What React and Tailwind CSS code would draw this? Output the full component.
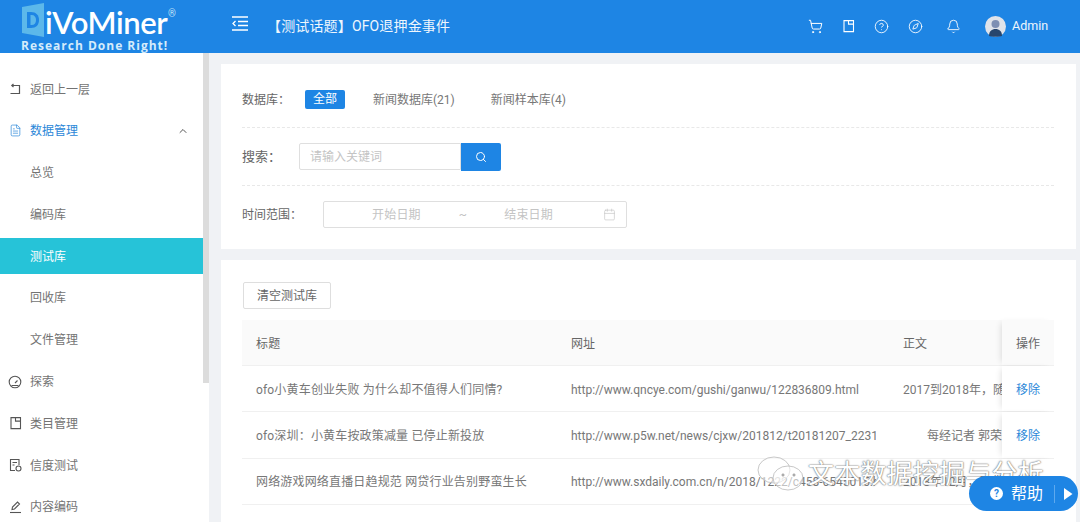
import React from "react";
import { ShoppingCart, CircleHelp, Compass, Bell, Search, Calendar, FileText, ChevronUp } from "lucide-react";

const FONT = "font-['Roboto','Noto_Sans_CJK_SC',sans-serif]";

function BackIcon() {
  return (
    <svg width="13" height="13" viewBox="0 0 13 13" fill="none" stroke="currentColor" strokeWidth="1.2">
      <path d="M3 2.500h7.500v8H1.500" />
      <path d="M4.500 1L2.800 2.500 4.500 4" />
    </svg>
  );
}

function BookIcon({ size = 13 }) {
  return (
    <svg width={size} height={size * 1.1} viewBox="0 0 13 14" fill="none" stroke="currentColor" strokeWidth="1.1">
      <path d="M2 1.500h9.500v11H2z" />
      <path d="M6.500 1.500v3.500h5" />
    </svg>
  );
}

function GaugeIcon() {
  return (
    <svg width="14" height="14" viewBox="0 0 14 14" fill="none" stroke="currentColor" strokeWidth="1.1">
      <circle cx="7" cy="7" r="5.800" />
      <path d="M7 8l2.500-2.500M3.500 10.500h7" />
    </svg>
  );
}

function TrustIcon() {
  return (
    <svg width="13" height="14" viewBox="0 0 13 14" fill="none" stroke="currentColor" strokeWidth="1.1">
      <path d="M6 12.500H1.500v-11h8.500v5.500" />
      <path d="M3.500 4.500h4.500M3.500 7h2" />
      <circle cx="9.500" cy="10.500" r="2.500" />
    </svg>
  );
}

function PenIcon() {
  return (
    <svg width="13" height="14" viewBox="0 0 13 14" fill="none" stroke="currentColor" strokeWidth="1.1">
      <path d="M3 9.500l.5-2.500L8.500 2l2 2-5 5z" />
      <path d="M1 12.500h11" />
    </svg>
  );
}

function MenuItem({ icon, label, active, sub, blue, chevron }) {
  return (
    <div
      className={`flex h-[36px] items-center text-[12px] shrink-0 ${
        active ? "bg-[#26c3d8] text-white" : blue ? "text-[#2b87d8]" : "text-[#737373]"
      }`}
    >
      {sub ? (
        <span className="pl-[30px] pt-[1px]">{label}</span>
      ) : (
        <>
          <span className="flex w-[30px] justify-center text-[#555]">
            <span className={blue ? "text-[#2b87d8]" : ""}>{icon}</span>
          </span>
          <span className="pt-[1px]">{label}</span>
        </>
      )}
      {chevron && <ChevronUp size={12} className="ml-auto mr-[14px] text-[#555]" />}
    </div>
  );
}

function Logo() {
  return (
    <div className="relative h-[53px] w-[203px] shrink-0 overflow-hidden">
      <svg className="absolute left-[22px] top-[3px]" width="22" height="34" viewBox="0 0 22 34">
        <path d="M0 4L22 0v34L0 30z" fill="#5cb8ea" />
        <path d="M5 9h4c5 0 8 3 8 8s-3 8-8 8H5z" fill="#1e85e4" />
        <path d="M8.500 12h1c3 0 4.500 2 4.500 5s-1.500 5-4.500 5h-1z" fill="#5cb8ea" />
      </svg>
      <div className="absolute left-[45px] top-[0px] font-['Lato',sans-serif] text-[31px] leading-[44px] font-semibold tracking-[-0.4px] whitespace-nowrap text-white">
        iVoMiner
      </div>
      <div className="absolute left-[168px] top-[9px] text-[10px] leading-[10px] text-[#bfe0f7]">®</div>
      <div className="absolute left-[21px] top-[38px] font-['Open_Sans',sans-serif] text-[12px] leading-[15px] font-bold tracking-[1px] whitespace-nowrap text-[#d5ecfb]">
        Research Done Right!
      </div>
    </div>
  );
}

function Header() {
  return (
    <header className="flex h-[53px] shrink-0 items-center bg-[#1e85e4] text-white">
      <Logo />
      <svg className="ml-[29px] mb-[7px] shrink-0" width="16" height="15" viewBox="0 0 16 15" fill="none" stroke="currentColor" strokeWidth="1.300">
        <path d="M0 1h16M6 5.500h10M6 9.500h10M0 14h16" />
        <path d="M3.500 5L1 7.500 3.500 10" />
      </svg>
      <span className="ml-[19px] mb-[1px] text-[14px] tracking-[0.15px] whitespace-nowrap text-[#eef6fd]">【测试话题】OFO退押金事件</span>
      <div className="ml-auto flex items-center">
        <span className="flex w-[20px] justify-center"><ShoppingCart size={15} strokeWidth={1.6} /></span>
        <span className="ml-[13px] flex w-[20px] justify-center"><BookIcon size={13} /></span>
        <span className="ml-[13px] flex w-[20px] justify-center"><CircleHelp size={15} strokeWidth={1.4} /></span>
        <span className="ml-[14px] flex w-[20px] justify-center"><Compass size={15} strokeWidth={1.4} /></span>
        <span className="ml-[18px] flex w-[20px] justify-center"><Bell size={15} strokeWidth={1.4} /></span>
        <svg className="ml-[22px]" width="21" height="21" viewBox="0 0 21 21">
          <circle cx="10.500" cy="10.500" r="10.500" fill="#dfe3ea" />
          <circle cx="10.500" cy="8" r="4" fill="#7d8fb3" />
          <path d="M4 20c0-5 3-7 6.500-7s6.500 2 6.500 7c-2 1-11 1-13 0z" fill="#27466e" />
        </svg>
        <span className="ml-[6px] mr-[26px] mb-[1px] w-[42px] text-[12.500px] text-[#eef6fd]">Admin</span>
      </div>
    </header>
  );
}

function Sidebar() {
  return (
    <aside className="flex w-[209px] shrink-0 self-stretch overflow-hidden bg-white">
      <nav className="flex w-[203px] flex-col gap-[5.800px] pt-[18px]">
        <MenuItem icon={<BackIcon />} label="返回上一层" />
        <MenuItem icon={<FileText size={13} strokeWidth={1.3} />} label="数据管理" blue chevron />
        <MenuItem sub label="总览" />
        <MenuItem sub label="编码库" />
        <MenuItem sub label="测试库" active />
        <MenuItem sub label="回收库" />
        <MenuItem sub label="文件管理" />
        <MenuItem icon={<GaugeIcon />} label="探索" />
        <MenuItem icon={<BookIcon />} label="类目管理" />
        <MenuItem icon={<TrustIcon />} label="信度测试" />
        <MenuItem icon={<PenIcon />} label="内容编码" />
      </nav>
      <div className="h-[330px] w-[6px] bg-[#dcdcdc]" />
    </aside>
  );
}

function Filters() {
  return (
    <section className="h-[185px] bg-white pl-[21px] pr-[22px] text-[12px] text-[#666]">
      <div className="flex h-[64px] items-center border-b border-dashed border-[#e8e8e8] pt-[7px]">
        <span className="w-[63px] pt-[2px]">数据库：</span>
        <span className="flex h-[19px] w-[40px] items-center justify-center rounded-[2px] bg-[#1e85e4] text-white">全部</span>
        <span className="ml-[28px] pt-[2px] text-[#777]">新闻数据库(21)</span>
        <span className="ml-[36px] pt-[2px] text-[#777]">新闻样本库(4)</span>
      </div>
      <div className="flex h-[58px] items-center border-b border-dashed border-[#e8e8e8]">
        <span className="w-[57px] text-[13px]">搜索：</span>
        <div className="flex h-[27px] w-[162px] items-center rounded-l-[2px] border border-[#dfdfdf] pl-[10px] pt-[1px] text-[#c4c4c4]">请输入关键词</div>
        <div className="flex h-[28px] w-[40px] items-center justify-center rounded-r-[2px] bg-[#1e85e4] text-white">
          <Search size={12} strokeWidth={2} />
        </div>
      </div>
      <div className="flex h-[56px] items-center">
        <span className="w-[81px] pt-[2px]">时间范围：</span>
        <div className="flex h-[27px] w-[304px] items-center rounded-[2px] border border-[#dfdfdf] pt-[1px] tracking-[0.2px] text-[#c4c4c4]">
          <span className="ml-[48px]">开始日期</span>
          <span className="ml-[38px]">~</span>
          <span className="ml-[37px]">结束日期</span>
          <Calendar size={13} strokeWidth={1.2} className="ml-[50px]" />
        </div>
      </div>
    </section>
  );
}

const ROWS = [
  ["ofo小黄车创业失败 为什么却不值得人们同情?", "http://www.qncye.com/gushi/ganwu/122836809.html", "2017到2018年，随着共享单车", 0],
  ["ofo深圳：小黄车按政策减量 已停止新投放", "http://www.p5w.net/news/cjxw/201812/t20181207_2231234.htm", "每经记者 郭荣", 24],
  ["网络游戏网络直播日趋规范 网贷行业告别野蛮生长", "http://www.sxdaily.com.cn/n/2018/1222/c458-6545015.html", "2018年12月，网贷行业", 0],
];

function Row({ row, head }) {
  const base = "grid grid-cols-[315px_332px_113px_52px] items-center border-b border-[#f0f0f0] text-[12px]";
  return (
    <div className={`${base} ${head ? "h-[46px] bg-[#fafafa] text-[#666]" : "h-[46.300px] text-[#777]"}`}>
      <div className="overflow-hidden pl-[14px] pt-[2px] tracking-[0.17px] whitespace-nowrap">{row[0]}</div>
      <div className="mr-[13px] overflow-hidden pl-[14px] pt-[2px] whitespace-nowrap">{row[1]}</div>
      <div className="overflow-hidden pl-[14px] pt-[2px] whitespace-nowrap">
        <span className={row[3] ? "pl-[24px]" : ""}>{row[2]}</span>
      </div>
      <div className={`flex h-full items-center pl-[14px] pt-[2px] shadow-[-4px_0_6px_-3px_rgba(0,0,0,0.12)] ${head ? "bg-[#fafafa] text-[#666]" : "bg-white text-[#2b87d8]"}`}>
        {head ? "操作" : "移除"}
      </div>
    </div>
  );
}

function Results() {
  return (
    <section className="mt-[11px] flex-1 bg-white pl-[21px] pr-[22px] pt-[22px]">
      <button className="ml-[1px] flex h-[27px] w-[88px] items-center justify-center rounded-[2px] border border-[#dedede] text-[12px] text-[#666]">清空测试库</button>
      <div className="mt-[11px]">
        <Row head row={["标题", "网址", "正文", 0]} />
        {ROWS.map((r) => <Row key={r[0]} row={r} />)}
      </div>
    </section>
  );
}

function Watermark() {
  return (
    <div className="absolute left-[757px] top-[456px] flex items-center">
      <svg width="50" height="36" viewBox="0 0 50 36" fill="rgba(255,255,255,0.55)" stroke="#b9b9b9" strokeWidth="0.8">
        <ellipse cx="17" cy="14" rx="16" ry="13" />
        <ellipse cx="31" cy="22" rx="15" ry="12" />
        <circle cx="26" cy="19" r="1.200" fill="#999" />
        <circle cx="37" cy="19" r="1.200" fill="#999" />
      </svg>
      <span className="ml-[1px] text-[26px] leading-[32px] tracking-[0.2px] whitespace-nowrap text-white [text-shadow:0_0_2px_#777,0_0_1px_#555]">文本数据挖掘与分析</span>
    </div>
  );
}

function HelpButton() {
  return (
    <div className="absolute left-[969px] top-[476px] flex h-[35px] w-[109px] items-center rounded-full bg-[#1e85e4] text-white">
      <span className="ml-[21px] flex h-[13px] w-[13px] items-center justify-center rounded-full bg-white text-[10px] leading-none font-bold text-[#1e85e4]">?</span>
      <span className="ml-[8px] text-[16px] leading-none">帮助</span>
      <span className="ml-[11px] h-[18px] w-px bg-[#5ea9ee]" />
      <svg className="ml-[9px]" width="9" height="12" viewBox="0 0 9 12"><path d="M0 0l8.500 6L0 12z" fill="#fff" /></svg>
    </div>
  );
}

export default function App() {
  return (
    <div className={`relative flex h-[522px] w-[1080px] flex-col overflow-hidden bg-[#f0f2f5] ${FONT}`}>
      <Header />
      <div className="flex min-h-0 flex-1">
        <Sidebar />
        <main className="box-content flex w-[855px] flex-col pl-[12px] pt-[11px]">
          <Filters />
          <Results />
        </main>
      </div>
      <Watermark />
      <HelpButton />
    </div>
  );
}
